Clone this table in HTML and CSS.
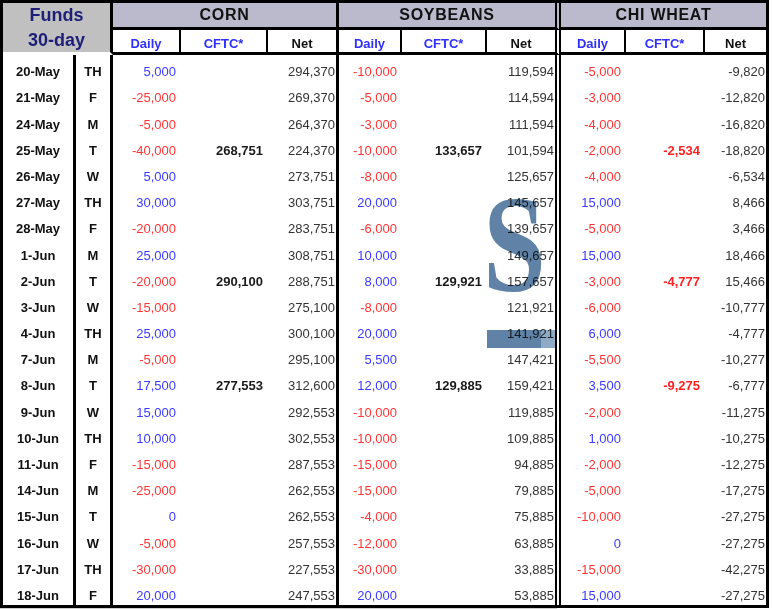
FILE: index.html
```html
<!DOCTYPE html>
<html>
<head>
<meta charset="utf-8">
<title>Funds 30-day</title>
<link rel="stylesheet" href="styles.css">
</head>
<body>
<div class="sheet">
  <div class="funds"><span class="l1">Funds</span><span class="l2">30-day</span></div>
  <div class="sec e3">CORN</div>
  <div class="sec e6">SOYBEANS</div>
  <div class="sec e3">CHI WHEAT</div>

  <div class="sub blue sl">Daily</div><div class="sub blue sl">CFTC*</div><div class="sub e3">Net</div>
  <div class="sub blue sl">Daily</div><div class="sub blue sl">CFTC*</div><div class="sub e6">Net</div>
  <div class="sub blue sl">Daily</div><div class="sub blue sl">CFTC*</div><div class="sub e3">Net</div>

  <div class="c dt">20-May</div><div class="c dy">TH</div><div class="c d pos">5,000</div><div class="c f"></div><div class="c n e3">294,370</div><div class="c d neg">-10,000</div><div class="c f"></div><div class="c n e6">119,594</div><div class="c d neg">-5,000</div><div class="c f"></div><div class="c n e3">-9,820</div>
  <div class="c dt">21-May</div><div class="c dy">F</div><div class="c d neg">-25,000</div><div class="c f"></div><div class="c n e3">269,370</div><div class="c d neg">-5,000</div><div class="c f"></div><div class="c n e6">114,594</div><div class="c d neg">-3,000</div><div class="c f"></div><div class="c n e3">-12,820</div>
  <div class="c dt">24-May</div><div class="c dy">M</div><div class="c d neg">-5,000</div><div class="c f"></div><div class="c n e3">264,370</div><div class="c d neg">-3,000</div><div class="c f"></div><div class="c n e6">111,594</div><div class="c d neg">-4,000</div><div class="c f"></div><div class="c n e3">-16,820</div>
  <div class="c dt">25-May</div><div class="c dy">T</div><div class="c d neg">-40,000</div><div class="c f">268,751</div><div class="c n e3">224,370</div><div class="c d neg">-10,000</div><div class="c f">133,657</div><div class="c n e6">101,594</div><div class="c d neg">-2,000</div><div class="c f red">-2,534</div><div class="c n e3">-18,820</div>
  <div class="c dt">26-May</div><div class="c dy">W</div><div class="c d pos">5,000</div><div class="c f"></div><div class="c n e3">273,751</div><div class="c d neg">-8,000</div><div class="c f"></div><div class="c n e6">125,657</div><div class="c d neg">-4,000</div><div class="c f"></div><div class="c n e3">-6,534</div>
  <div class="c dt">27-May</div><div class="c dy">TH</div><div class="c d pos">30,000</div><div class="c f"></div><div class="c n e3">303,751</div><div class="c d pos">20,000</div><div class="c f"></div><div class="c n e6">145,657</div><div class="c d pos">15,000</div><div class="c f"></div><div class="c n e3">8,466</div>
  <div class="c dt">28-May</div><div class="c dy">F</div><div class="c d neg">-20,000</div><div class="c f"></div><div class="c n e3">283,751</div><div class="c d neg">-6,000</div><div class="c f"></div><div class="c n e6">139,657</div><div class="c d neg">-5,000</div><div class="c f"></div><div class="c n e3">3,466</div>
  <div class="c dt">1-Jun</div><div class="c dy">M</div><div class="c d pos">25,000</div><div class="c f"></div><div class="c n e3">308,751</div><div class="c d pos">10,000</div><div class="c f"></div><div class="c n e6">149,657</div><div class="c d pos">15,000</div><div class="c f"></div><div class="c n e3">18,466</div>
  <div class="c dt">2-Jun</div><div class="c dy">T</div><div class="c d neg">-20,000</div><div class="c f">290,100</div><div class="c n e3">288,751</div><div class="c d pos">8,000</div><div class="c f">129,921</div><div class="c n e6">157,657</div><div class="c d neg">-3,000</div><div class="c f red">-4,777</div><div class="c n e3">15,466</div>
  <div class="c dt">3-Jun</div><div class="c dy">W</div><div class="c d neg">-15,000</div><div class="c f"></div><div class="c n e3">275,100</div><div class="c d neg">-8,000</div><div class="c f"></div><div class="c n e6">121,921</div><div class="c d neg">-6,000</div><div class="c f"></div><div class="c n e3">-10,777</div>
  <div class="c dt">4-Jun</div><div class="c dy">TH</div><div class="c d pos">25,000</div><div class="c f"></div><div class="c n e3">300,100</div><div class="c d pos">20,000</div><div class="c f"></div><div class="c n e6">141,921</div><div class="c d pos">6,000</div><div class="c f"></div><div class="c n e3">-4,777</div>
  <div class="c dt">7-Jun</div><div class="c dy">M</div><div class="c d neg">-5,000</div><div class="c f"></div><div class="c n e3">295,100</div><div class="c d pos">5,500</div><div class="c f"></div><div class="c n e6">147,421</div><div class="c d neg">-5,500</div><div class="c f"></div><div class="c n e3">-10,277</div>
  <div class="c dt">8-Jun</div><div class="c dy">T</div><div class="c d pos">17,500</div><div class="c f">277,553</div><div class="c n e3">312,600</div><div class="c d pos">12,000</div><div class="c f">129,885</div><div class="c n e6">159,421</div><div class="c d pos">3,500</div><div class="c f red">-9,275</div><div class="c n e3">-6,777</div>
  <div class="c dt">9-Jun</div><div class="c dy">W</div><div class="c d pos">15,000</div><div class="c f"></div><div class="c n e3">292,553</div><div class="c d neg">-10,000</div><div class="c f"></div><div class="c n e6">119,885</div><div class="c d neg">-2,000</div><div class="c f"></div><div class="c n e3">-11,275</div>
  <div class="c dt">10-Jun</div><div class="c dy">TH</div><div class="c d pos">10,000</div><div class="c f"></div><div class="c n e3">302,553</div><div class="c d neg">-10,000</div><div class="c f"></div><div class="c n e6">109,885</div><div class="c d pos">1,000</div><div class="c f"></div><div class="c n e3">-10,275</div>
  <div class="c dt">11-Jun</div><div class="c dy">F</div><div class="c d neg">-15,000</div><div class="c f"></div><div class="c n e3">287,553</div><div class="c d neg">-15,000</div><div class="c f"></div><div class="c n e6">94,885</div><div class="c d neg">-2,000</div><div class="c f"></div><div class="c n e3">-12,275</div>
  <div class="c dt">14-Jun</div><div class="c dy">M</div><div class="c d neg">-25,000</div><div class="c f"></div><div class="c n e3">262,553</div><div class="c d neg">-15,000</div><div class="c f"></div><div class="c n e6">79,885</div><div class="c d neg">-5,000</div><div class="c f"></div><div class="c n e3">-17,275</div>
  <div class="c dt">15-Jun</div><div class="c dy">T</div><div class="c d pos">0</div><div class="c f"></div><div class="c n e3">262,553</div><div class="c d neg">-4,000</div><div class="c f"></div><div class="c n e6">75,885</div><div class="c d neg">-10,000</div><div class="c f"></div><div class="c n e3">-27,275</div>
  <div class="c dt">16-Jun</div><div class="c dy">W</div><div class="c d neg">-5,000</div><div class="c f"></div><div class="c n e3">257,553</div><div class="c d neg">-12,000</div><div class="c f"></div><div class="c n e6">63,885</div><div class="c d pos">0</div><div class="c f"></div><div class="c n e3">-27,275</div>
  <div class="c dt">17-Jun</div><div class="c dy">TH</div><div class="c d neg">-30,000</div><div class="c f"></div><div class="c n e3">227,553</div><div class="c d neg">-30,000</div><div class="c f"></div><div class="c n e6">33,885</div><div class="c d neg">-15,000</div><div class="c f"></div><div class="c n e3">-42,275</div>
  <div class="c dt">18-Jun</div><div class="c dy">F</div><div class="c d pos">20,000</div><div class="c f"></div><div class="c n e3">247,553</div><div class="c d pos">20,000</div><div class="c f"></div><div class="c n e6">53,885</div><div class="c d pos">15,000</div><div class="c f"></div><div class="c n e3">-27,275</div>

  <div class="mark-s" aria-hidden="true">S</div>
  <div class="mark-bar"><span class="mark-bar-end"></span></div>
</div>
<div class="shade"></div>
</body>
</html>
```

FILE: styles.css
```css
* {
  box-sizing: border-box;
}

body {
  margin: 0;
  background: #ffffff;
  font-family: "Liberation Sans", Arial, sans-serif;
}

.sheet {
  position: relative;
  display: grid;
  width: 769px;
  grid-template-columns: 73px 37px 68px 87px 71px 63px 85px 74px 65px 79px 64px;
  grid-template-rows: 27px 25px repeat(21, 26.2px);
  border-left: 3px solid #000;
  border-top: 3px solid #000;
  border-bottom: 3px solid #000;
}

.funds {
  grid-column: 1 / 3;
  grid-row: 1 / 3;
  display: flex;
  flex-direction: column;
  align-items: center;
  background: #c0c0c0;
  border-right: 3px solid #000;
  border-bottom: 3px solid #fff;
  color: #1e1e78;
  font-size: 18px;
  font-weight: bold;
}

.funds .l1 {
  line-height: 24px;
}

.funds .l2 {
  line-height: 26px;
}

.sec {
  grid-column: span 3;
  display: flex;
  align-items: center;
  justify-content: center;
  background: #babacc;
  border-bottom: 3px solid #000;
  font-size: 16px;
  font-weight: bold;
  letter-spacing: 0.7px;
  line-height: 24px;
  color: #111;
}

.sub {
  display: flex;
  align-items: flex-end;
  justify-content: center;
  padding-bottom: 1px;
  border-bottom: 3px solid #000;
  font-size: 13px;
  font-weight: bold;
  line-height: 15px;
  color: #111;
}

.sub.sl {
  border-right: 2px solid #000;
}

.sub.blue {
  color: #2f2fff;
}

.c {
  display: flex;
  align-items: flex-end;
  padding-bottom: 2px;
  font-size: 13px;
  line-height: 15px;
  white-space: nowrap;
}

.dt,
.dy {
  justify-content: center;
  font-weight: bold;
  color: #111;
  border-right: 3px solid #000;
}

.d {
  justify-content: flex-end;
  padding-right: 5px;
}

.f {
  justify-content: flex-end;
  padding-right: 5px;
  font-weight: bold;
  color: #1a1a1a;
}

.f.red {
  color: #ff2222;
}

.n {
  justify-content: flex-end;
  padding-right: 1px;
  color: #333;
}

.pos {
  color: #3a3aff;
}

.neg {
  color: #ff3535;
}

.e3 {
  border-right: 3px solid #000;
}

.e6 {
  border-right: 6px double #000;
}

.mark-s {
  position: absolute;
  left: 480px;
  top: 173px;
  font-family: "Liberation Serif", "Times New Roman", serif;
  font-size: 138px;
  font-weight: bold;
  line-height: 1;
  color: #5f82a6;
  transform: scaleX(0.82);
  transform-origin: left top;
  mix-blend-mode: multiply;
  pointer-events: none;
}

.mark-bar {
  position: absolute;
  left: 484px;
  top: 327px;
  width: 68px;
  height: 18px;
  background: #5f82a6;
  mix-blend-mode: multiply;
  display: flex;
  justify-content: flex-end;
}

.mark-bar-end {
  width: 14px;
  background: #8eaac6;
}

.shade {
  width: 557px;
  height: 3px;
  background: #cfcfcf;
}
```
